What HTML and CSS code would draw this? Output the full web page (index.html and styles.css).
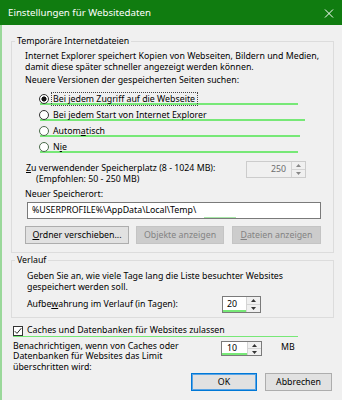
FILE: index.html
```html
<!DOCTYPE html>
<html lang="de">
<head>
    <meta charset="UTF-8">
    <meta name="viewport" content="width=device-width, initial-scale=1.0">
    <title>Einstellungen für Websitedaten</title>
    <link rel="stylesheet" href="styles.css">
</head>
<body>
    <div class="window">
        <!-- Title bar -->
        <div class="titlebar">
            <span class="title">Einstellungen für Websitedaten</span>
            <svg class="close" width="10" height="9" viewBox="0 0 10 9"><path d="M1 0.5L9 8.5M9 0.5L1 8.5" stroke="#fff" stroke-width="1"/></svg>
        </div>

        <div class="content">
            <!-- Temporary internet files -->
            <fieldset class="group">
                <legend>Temporäre Internetdateien</legend>
                <div class="group-body">
                    <p class="text">Internet Explorer speichert Kopien von Webseiten, Bildern und Medien,<br>damit diese später schneller angezeigt werden können.</p>
                    <p class="text question">Neuere Versionen der gespeicherten Seiten suchen:</p>
                    <div class="radios">
                        <div class="radio-row mark-1"><span class="radio on"></span><span class="radio-label focused">Bei jedem Zugriff auf die Webseite</span></div>
                        <div class="radio-row mark-2"><span class="radio"></span><span class="radio-label">Bei jedem Start von Internet Explorer</span></div>
                        <div class="radio-row mark-3"><span class="radio"></span><span class="radio-label">Autom<u>a</u>tisch</span></div>
                        <div class="radio-row mark-4"><span class="radio"></span><span class="radio-label">N<u>i</u>e</span></div>
                    </div>
                    <div class="space-row">
                        <div class="space-label">
                            <span class="line"><u>Z</u>u verwendender Speicherplatz (8 - 1024 MB):</span>
                            <span class="line indent">(Empfohlen: 50 - 250 MB)</span>
                        </div>
                        <div class="spin spin-disabled spin-space">
                            <span class="spin-value">250</span>
                            <span class="spin-btns">
                                <span class="spin-btn"><svg width="5" height="3" viewBox="0 0 5 3"><path d="M0 3L2.5 0L5 3Z"/></svg></span>
                                <span class="spin-btn"><svg width="5" height="3" viewBox="0 0 5 3"><path d="M0 0L2.5 3L5 0Z"/></svg></span>
                            </span>
                        </div>
                    </div>
                    <p class="text location-label">Neuer Speicherort:</p>
                    <div class="path-input">%USERPROFILE%\AppData\Local\Temp\</div>
                    <div class="button-row">
                        <span class="btn btn-move"><u>O</u>rdner verschieben...</span>
                        <span class="btn btn-objects disabled">Objekte anzeigen</span>
                        <span class="btn btn-files disabled"><u>D</u>ateien anzeigen</span>
                    </div>
                </div>
            </fieldset>

            <!-- History -->
            <fieldset class="group group-history">
                <legend>Verlauf</legend>
                <div class="group-body">
                    <p class="text">Geben Sie an, wie viele Tage lang die Liste besuchter Websites<br>gespeichert werden soll.</p>
                    <div class="days-row">
                        <span class="days-label">Aufbe<u>w</u>ahrung im Verlauf (in Tagen):</span>
                        <div class="spin spin-days">
                            <span class="spin-value marked">20</span>
                            <span class="spin-btns">
                                <span class="spin-btn"><svg width="5" height="3" viewBox="0 0 5 3"><path d="M0 3L2.5 0L5 3Z"/></svg></span>
                                <span class="spin-btn"><svg width="5" height="3" viewBox="0 0 5 3"><path d="M0 0L2.5 3L5 0Z"/></svg></span>
                            </span>
                        </div>
                    </div>
                </div>
            </fieldset>

            <!-- Caches -->
            <div class="check-row">
                <span class="checkbox"><svg width="8" height="8" viewBox="0 0 8 8"><path d="M0.8 4.2L3 6.4L7.3 1.2" fill="none" stroke="#222" stroke-width="1"/></svg></span>
                <span>Caches und Datenbanken für Websites zulassen</span>
            </div>
            <div class="notify-row">
                <p class="notify-text">Benachrichtigen, wenn von Caches oder<br>Datenbanken für Websites das Limit<br>überschritten wird:</p>
                <div class="spin spin-limit">
                    <span class="spin-value marked">10</span>
                    <span class="spin-btns">
                        <span class="spin-btn"><svg width="5" height="3" viewBox="0 0 5 3"><path d="M0 3L2.5 0L5 3Z"/></svg></span>
                        <span class="spin-btn"><svg width="5" height="3" viewBox="0 0 5 3"><path d="M0 0L2.5 3L5 0Z"/></svg></span>
                    </span>
                </div>
                <span class="unit">MB</span>
            </div>

            <div class="footer">
                <span class="btn btn-dialog btn-default">OK</span>
                <span class="btn btn-dialog">Abbrechen</span>
            </div>
        </div>
    </div>
</body>
</html>
```

FILE: styles.css
```css
* { box-sizing: border-box; }
body { margin: 0; background: #f0f0f0; font-family: "Noto Sans", "Liberation Sans", sans-serif; font-size: 8.8px; line-height: 11px; color: #000; }
p { margin: 0; }
u { text-underline-offset: 1px; }

.window { width: 342px; height: 400px; overflow: hidden; }

/* title bar */
.titlebar { height: 25px; background: #107c10; display: flex; align-items: center; justify-content: space-between; padding: 0 8px 0 8px; color: #fff; }
.title { font-size: 9.7px; }
.close { margin-top: 1px; }

.content { border-left: 2px solid #9ad89a; padding: 11px 8px 0 9px; height: 375px; }

/* group boxes */
.group { margin: 0; padding: 0; border: 1px solid #dcdcdc; }
.group legend { margin-left: 3px; padding: 0 2px; line-height: 11px; }
.group-body { padding: 4px 12px 8px 13px; }
.group-history { margin-top: 1.5px; }
.group-history .group-body { padding: 5px 12px 4px 15px; }

.question { margin-top: 2px; }

/* radio buttons */
.radios { margin-top: 5px; }
.radio-row { display: flex; align-items: center; height: 16px; margin-left: 14px; background: linear-gradient(#77e877, #77e877) no-repeat 1px 12px / 258px 2px; }
.mark-2 { background-size: 265px 2px; }
.mark-3 { background-size: 260px 2px; }
.radio { width: 10px; height: 10px; border: 1px solid #333; border-radius: 50%; background: #fff; margin-right: 3px; }
.mark-3 .radio, .mark-4 .radio { border-color: #4a6a4a; }
.radio.on { background: radial-gradient(circle, #111 0 2.3px, #fff 2.8px); }
.radio-label { padding: 0 1px; line-height: 12px; }
.radio-label.focused { outline: 1px dotted #444; padding-right: 2px; }

/* storage size */
.space-row { display: flex; align-items: flex-start; margin-top: 6px; }
.space-label { flex: 1; padding-top: 1.5px; }
.space-label .line { display: block; padding-left: 1px; }
.space-label .indent { padding-left: 11px; }

.spin { display: flex; height: 17px; border: 1px solid #7a7a7a; background: #fff; }
.spin-value { flex: 1; padding-left: 4px; line-height: 15px; }
.spin-value.marked { background: linear-gradient(#77e877, #77e877) no-repeat 0 100% / 100% 2px; }
.spin-btns { width: 14px; display: flex; flex-direction: column; background: #f0f0f0; border-left: 1px solid #d4d4d4; }
.spin-btn { flex: 1; display: flex; align-items: center; justify-content: center; }
.spin-btn + .spin-btn { border-top: 1px solid #d4d4d4; }
.spin-btn svg { fill: #333; }
.spin-space { width: 60px; margin-right: 15px; }
.spin-disabled { border-color: #cccccc; background: #f0f0f0; color: #6d6d6d; }
.spin-disabled .spin-value { text-align: right; padding-right: 5px; }
.spin-disabled .spin-btn svg { fill: #888; }

.location-label { margin-top: 4px; }
.path-input { margin: 2.5px 0 0 2px; height: 17px; border: 1px solid #7a7a7a; background: #fff linear-gradient(#a8e8a8, #a8e8a8) no-repeat 176px 14px / 32px 1px; padding-left: 4px; line-height: 15px; }

/* buttons */
.button-row { display: flex; margin-top: 7px; }
.btn { display: flex; align-items: center; justify-content: center; height: 18px; background: #e1e1e1; border: 1px solid #adadad; }
.btn.disabled { background: #cccccc; border-color: #c4c4c4; color: #838383; }
.btn-move { width: 104px; }
.btn-objects { width: 88px; margin-left: 7px; }
.btn-files { width: 89px; margin-left: 8px; }

/* history */
.days-row { display: flex; align-items: center; margin-top: 3.5px; }
.days-label { width: 195px; }
.spin-days { width: 39px; }

/* caches */
.check-row { display: flex; align-items: center; height: 13px; width: 285px; margin: 6px 0 0 2px; background: linear-gradient(#77e877, #77e877) no-repeat 0 12px / 285px 2px; }
.checkbox { width: 10px; height: 10px; border: 1px solid #333; background: #fff; margin-right: 4px; display: flex; align-items: center; justify-content: center; }

.notify-row { display: flex; align-items: flex-start; margin: 3.5px 0 0 2px; }
.notify-text { width: 208px; line-height: 10.5px; }
.spin-limit { width: 41px; height: 15px; margin-top: 0.5px; }
.spin-limit .spin-value { line-height: 13px; padding-left: 5px; }
.unit { margin: 1px 0 0 19px; }

.footer { display: flex; justify-content: flex-end; margin-top: 1px; padding-right: 2px; }
.btn-dialog { width: 67px; margin-left: 8px; }
.btn-default { width: 66px; border-color: #0078d7; box-shadow: inset 0 0 0 1px #5aa4e4; }
```
